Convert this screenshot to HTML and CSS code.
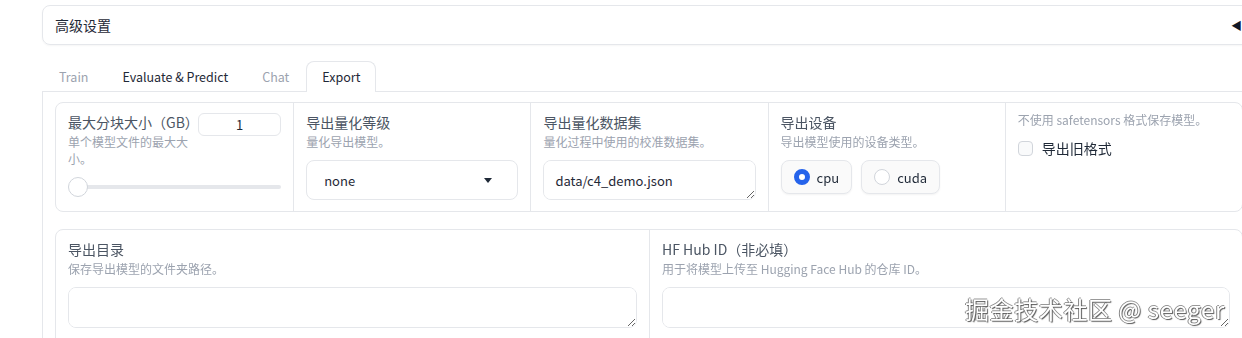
FILE: index.html
```html
<!DOCTYPE html>
<html lang="zh-CN">
<head>
    <meta charset="UTF-8">
    <title>Export</title>
    <link rel="stylesheet" href="styles.css">
</head>
<body>
    <div class="page">
        <div class="accordion">
            <span>高级设置</span>
            <span class="caret">◀</span>
        </div>

        <div class="tabs">
            <div class="tab disabled">Train</div>
            <div class="tab">Evaluate &amp; Predict</div>
            <div class="tab disabled">Chat</div>
            <div class="tab selected">Export</div>
        </div>

        <div class="tab-panel">
            <!-- first row: size, quantization, dataset, device, legacy -->
            <div class="row row-top">
                <div class="cell">
                    <div class="slider-head">
                        <div class="slider-text">
                            <div class="label">最大分块大小（GB）</div>
                            <div class="info">单个模型文件的最大大小。</div>
                        </div>
                        <input class="num" type="number" value="1">
                    </div>
                    <div class="slider">
                        <div class="thumb"></div>
                    </div>
                </div>

                <div class="cell">
                    <div class="label">导出量化等级</div>
                    <div class="info">量化导出模型。</div>
                    <div class="dropdown">
                        <span>none</span>
                        <span class="arrow"></span>
                    </div>
                </div>

                <div class="cell">
                    <div class="label">导出量化数据集</div>
                    <div class="info">量化过程中使用的校准数据集。</div>
                    <textarea class="box short">data/c4_demo.json</textarea>
                </div>

                <div class="cell">
                    <div class="label">导出设备</div>
                    <div class="info">导出模型使用的设备类型。</div>
                    <div class="radios">
                        <label class="radio"><span class="dot on"></span>cpu</label>
                        <label class="radio"><span class="dot"></span>cuda</label>
                    </div>
                </div>

                <div class="cell">
                    <div class="info">不使用 safetensors 格式保存模型。</div>
                    <label class="check"><span class="tick"></span>导出旧格式</label>
                </div>
            </div>

            <!-- second row: output dir, hub id -->
            <div class="row row-bottom">
                <div class="cell">
                    <div class="label">导出目录</div>
                    <div class="info">保存导出模型的文件夹路径。</div>
                    <textarea class="box"></textarea>
                </div>
                <div class="cell">
                    <div class="label">HF Hub ID（非必填）</div>
                    <div class="info">用于将模型上传至 Hugging Face Hub 的仓库 ID。</div>
                    <textarea class="box"></textarea>
                </div>
            </div>
        </div>
    </div>

    <div class="watermark">掘金技术社区 @ seeger</div>
</body>
</html>
```

FILE: styles.css
```css
/* General Page Styling */
body {
    margin: 0;
    font-family: "Noto Sans CJK SC", "Noto Sans", sans-serif;
    background: #ffffff;
    color: #1f2937;
    overflow: hidden;
    width: 1242px;
    height: 338px;
    position: relative;
}

.page {
    width: 1214px;
    padding: 5px 0 0 42px;
}

/* Accordion */
.accordion {
    height: 38px;
    border: 1px solid #e5e7eb;
    border-radius: 8px;
    display: flex;
    align-items: center;
    justify-content: space-between;
    padding: 0 13px 0 12px;
    font-size: 14px;
    color: #1f2937;
    box-shadow: 0 1px 2px rgba(0, 0, 0, 0.04);
}

.caret {
    font-size: 11px;
    color: #111827;
}

/* Tabs */
.tabs {
    display: flex;
    margin-top: 16px;
    border-bottom: 1px solid #e5e7eb;
}

.tab {
    padding: 0 16px;
    height: 29px;
    line-height: 29px;
    font-size: 12.5px;
    color: #1f2937;
    border: 1px solid transparent;
    border-bottom: none;
    border-radius: 8px 8px 0 0;
    margin-bottom: -1px;
}

.tab.disabled {
    color: #9ca3af;
}

.tab.selected {
    border-color: #e5e7eb;
    background: #ffffff;
    height: 30px;
    padding: 0 15px;
}

/* Tab panel */
.tab-panel {
    border: 1px solid #e5e7eb;
    border-top: none;
    padding: 10px 12px;
    height: 300px;
}

.row {
    display: grid;
    border: 1px solid #e5e7eb;
    border-radius: 8px;
    width: 1188px;
    box-sizing: border-box;
}

.row-top {
    grid-template-columns: repeat(5, 1fr);
    height: 110px;
}

.row-bottom {
    grid-template-columns: 1fr 1fr;
    margin-top: 17px;
    height: 120px;
}

.cell {
    padding: 8px 12px;
    border-left: 1px solid #e5e7eb;
}

.cell:first-child {
    border-left: none;
}

/* Labels */
.label {
    font-size: 14px;
    line-height: 22px;
    color: #4b5563;
}

.info {
    font-size: 12px;
    line-height: 17px;
    color: #9ca3af;
}

/* Slider cell */
.slider-head {
    display: flex;
    justify-content: space-between;
    align-items: flex-start;
}

.slider-text {
    width: 126px;
}

.num {
    width: 83px;
    height: 23px;
    margin-top: 2px;
    box-sizing: border-box;
    border: 1px solid #e5e7eb;
    border-radius: 6px;
    text-align: center;
    font-family: inherit;
    font-size: 13px;
    color: #1f2937;
    padding: 0;
    -moz-appearance: textfield;
}

.num::-webkit-inner-spin-button {
    -webkit-appearance: none;
}

.slider {
    position: relative;
    height: 4px;
    background: #e5e7eb;
    border-radius: 2px;
    margin-top: 18px;
}

.thumb {
    position: absolute;
    left: 0;
    top: -8px;
    width: 20px;
    height: 20px;
    border-radius: 50%;
    background: #ffffff;
    border: 1px solid #d1d5db;
    box-sizing: border-box;
}

/* Dropdown */
.dropdown {
    margin-top: 10px;
    height: 40px;
    box-sizing: border-box;
    border: 1px solid #e5e7eb;
    border-radius: 8px;
    display: flex;
    align-items: center;
    justify-content: space-between;
    padding: 0 25px 0 17px;
    font-size: 13px;
    color: #1f2937;
}

.arrow {
    width: 0;
    height: 0;
    border-left: 4px solid transparent;
    border-right: 4px solid transparent;
    border-top: 5px solid #1f2937;
}

/* Textareas */
.box {
    display: block;
    width: 100%;
    box-sizing: border-box;
    margin-top: 10px;
    height: 41px;
    border: 1px solid #e5e7eb;
    border-radius: 8px;
    padding: 10px 11px;
    font-family: inherit;
    font-size: 13px;
    line-height: 20px;
    color: #1f2937;
    resize: vertical;
    outline: none;
}

.box.short {
    height: 40px;
}

/* Radios */
.radios {
    display: flex;
    gap: 9px;
    margin-top: 10px;
}

.radio {
    display: flex;
    align-items: center;
    gap: 7px;
    height: 34px;
    box-sizing: border-box;
    padding: 0 12px;
    border: 1px solid #e5e7eb;
    border-radius: 8px;
    font-size: 13px;
    color: #1f2937;
    background: #fafafa;
    box-shadow: 0 1px 2px rgba(0, 0, 0, 0.05);
}

.dot {
    width: 16px;
    height: 16px;
    border-radius: 50%;
    border: 1px solid #d1d5db;
    box-sizing: border-box;
    background: #ffffff;
}

.dot.on {
    border: 5px solid #2563eb;
}

/* Checkbox */
.check {
    display: flex;
    align-items: center;
    gap: 9px;
    margin-top: 10px;
    font-size: 14px;
    color: #1f2937;
}

.tick {
    width: 15px;
    height: 15px;
    border: 1px solid #d1d5db;
    border-radius: 4px;
    box-sizing: border-box;
    background: #f9fafb;
}

/* Watermark overlay */
.watermark {
    position: absolute;
    left: 965px;
    top: 292px;
    font-size: 24px;
    line-height: 34px;
    letter-spacing: 0.6px;
    color: #ffffff;
    text-shadow: 1px 1px 1px #555, -1px 0 0 #888, 0 -1px 0 #999;
    white-space: nowrap;
}
```
